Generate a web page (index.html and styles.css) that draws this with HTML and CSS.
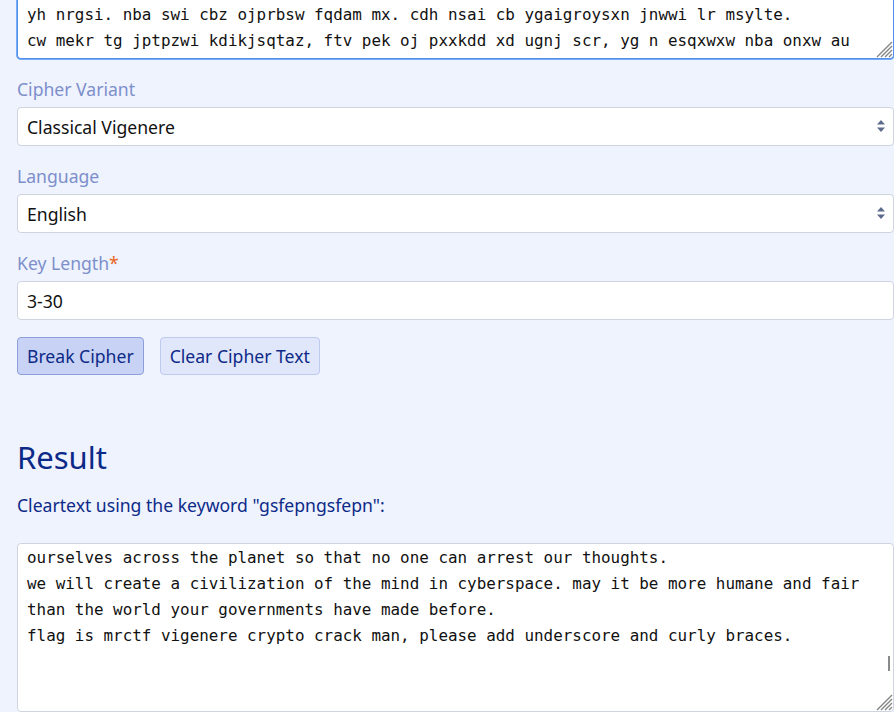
FILE: index.html
```html
<!DOCTYPE html>
<html lang="en">
<head>
<meta charset="utf-8">
<title>Vigenere Breaker</title>
<link rel="stylesheet" href="styles.css">
</head>
<body>
<main class="page">
  <div class="area-wrap">
    <textarea class="code-area top-area" wrap="off" spellcheck="false">yh nrgsi. nba swi cbz ojprbsw fqdam mx. cdh nsai cb ygaigroysxn jnwwi lr msylte.
cw mekr tg jptpzwi kdikjsqtaz, ftv pek oj pxxkdd xd ugnj scr, yg n esqxwxw nba onxw au</textarea>
    <svg class="grip" width="18" height="18" viewBox="0 0 18 18"><path d="M17 2 L2 17 M17 6 L6 17 M17 10 L10 17 M17 14 L14 17" stroke="#858585" stroke-width="1.4" fill="none"/></svg>
  </div>

  <div class="field">
    <label class="label">Cipher Variant</label>
    <div class="select-wrap">
      <select class="control"><option>Classical Vigenere</option></select>
      <svg class="arrows" width="10" height="14" viewBox="0 0 10 14"><path d="M5 1 L9 5.5 H1 Z M1 8.5 H9 L5 13 Z" fill="#5c6b8c"/></svg>
    </div>
  </div>

  <div class="field">
    <label class="label">Language</label>
    <div class="select-wrap">
      <select class="control"><option>English</option></select>
      <svg class="arrows" width="10" height="14" viewBox="0 0 10 14"><path d="M5 1 L9 5.5 H1 Z M1 8.5 H9 L5 13 Z" fill="#5c6b8c"/></svg>
    </div>
  </div>

  <div class="field">
    <label class="label">Key Length<span class="req">*</span></label>
    <input class="control" type="text" value="3-30">
  </div>

  <div class="buttons">
    <button class="btn btn-primary">Break Cipher</button>
    <button class="btn btn-secondary">Clear Cipher Text</button>
  </div>

  <h2 class="result-title">Result</h2>
  <p class="result-desc">Cleartext using the keyword "gsfepngsfepn":</p>

  <div class="area-wrap">
    <textarea class="code-area bottom-area" wrap="off" spellcheck="false">ourselves across the planet so that no one can arrest our thoughts.
we will create a civilization of the mind in cyberspace. may it be more humane and fair
than the world your governments have made before.
flag is mrctf vigenere crypto crack man, please add underscore and curly braces.</textarea>
    <span class="scroll-thumb"></span>
    <svg class="grip" width="18" height="18" viewBox="0 0 18 18"><path d="M17 2 L2 17 M17 6 L6 17 M17 10 L10 17 M17 14 L14 17" stroke="#858585" stroke-width="1.4" fill="none"/></svg>
  </div>
</main>
</body>
</html>
```

FILE: styles.css
```css
html, body {
  margin: 0;
  padding: 0;
  background: #eef3fe;
  overflow: hidden;
}

.page {
  padding: 0 0 0 17px;
  font-family: "Noto Sans", "Open Sans", "Liberation Sans", sans-serif;
  font-size: 17.6px;
  color: #111;
}

.area-wrap {
  position: relative;
}

.code-area {
  display: block;
  box-sizing: border-box;
  width: 100%;
  margin: 0;
  font-family: "DejaVu Sans Mono", "Liberation Mono", monospace;
  font-size: 15.9px;
  line-height: 26px;
  color: #111;
  background: #fff;
  padding: 0 9px;
  overflow: hidden;
  outline: none;
  resize: none;
}

.top-area {
  height: 59px;
  padding-top: 2px;
  border: 1px solid #4f8ff0;
  border-top: none;
  border-radius: 0 0 4px 4px;
  box-shadow: 0 1px 0 0 #7aaaf2, -1px 0 0 0 #7aaaf2;
}

.bottom-area {
  height: 169px;
  padding-top: 1px;
  border: 1px solid #cfd4e0;
  border-radius: 4px;
}

.grip {
  position: absolute;
  right: 1px;
  bottom: 1px;
  pointer-events: none;
}

.scroll-thumb {
  position: absolute;
  right: 4px;
  top: 113px;
  width: 2px;
  height: 15px;
  background: #8a8a8a;
}

.field {
  margin-top: 17px;
}

.label {
  display: block;
  line-height: 26px;
  margin-bottom: 5px;
  color: #7d8fcb;
}

.req {
  color: #e8671e;
}

.select-wrap {
  position: relative;
}

.control {
  display: block;
  box-sizing: border-box;
  width: 100%;
  height: 39px;
  margin: 0;
  padding: 0 9px;
  font-family: inherit;
  font-size: 17.6px;
  color: #111;
  background: #fff;
  border: 1px solid #cfd4e0;
  border-radius: 4px;
  -webkit-appearance: none;
  appearance: none;
  outline: none;
}

.arrows {
  position: absolute;
  right: 8px;
  top: 12px;
  pointer-events: none;
}

.buttons {
  display: flex;
  gap: 16px;
  margin-top: 17px;
}

.btn {
  box-sizing: border-box;
  height: 38px;
  padding: 0 9px;
  font-family: inherit;
  font-size: 17.6px;
  color: #0d2a88;
  border-radius: 4px;
  cursor: pointer;
}

.btn-primary {
  background: #c7d2f4;
  border: 1px solid #8c9fdc;
}

.btn-secondary {
  background: #e1e7fa;
  border: 1px solid #bfcaf0;
}

.result-title {
  margin: 62px 0 0 0;
  font-size: 31px;
  line-height: 40px;
  font-weight: 400;
  color: #0b2a88;
}

.result-desc {
  margin: 15px 0 25px 0;
  line-height: 26px;
  color: #0d2a88;
}
```
